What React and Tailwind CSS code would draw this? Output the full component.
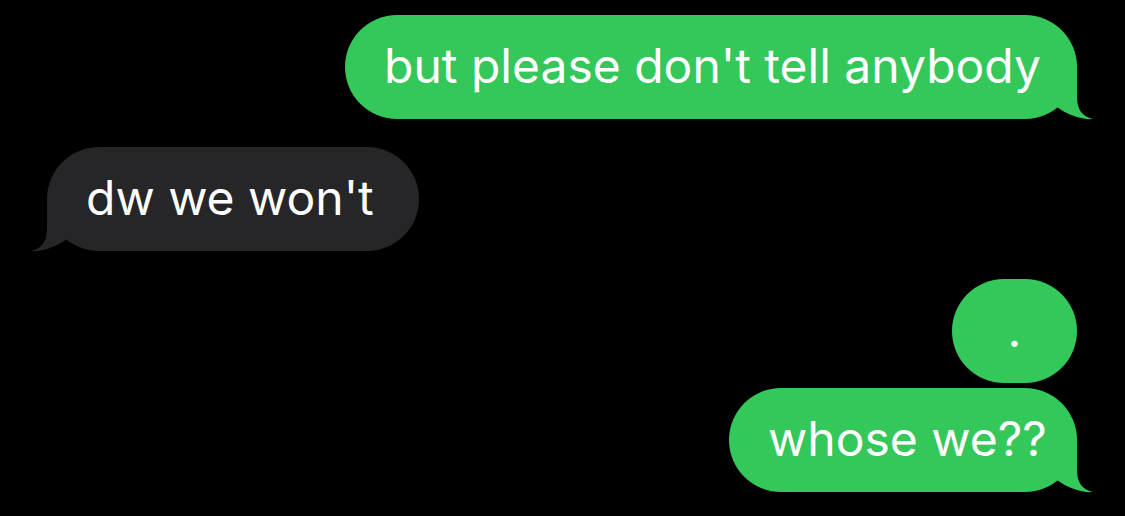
import React from "react";

function Tail({ color, left }) {
  return (
    <svg
      className={
        left
          ? "absolute bottom-[-2px] left-[-16px] -scale-x-100"
          : "absolute bottom-[-2px] right-[-16px]"
      }
      width="40"
      height="56"
      viewBox="0 0 40 56"
    >
      <path
        d="M24,0 L24,32 C24,45 30,52 40,54 C30,55 14,50 4,42 L0,0 Z"
        fill={color}
      />
    </svg>
  );
}

function Bubble({ text, side, width, tail = true }) {
  const sent = side === "right";
  const color = sent ? "#34c759" : "#262629";
  return (
    <div className={sent ? "flex justify-end pr-[48px]" : "flex justify-start pl-[47px]"}>
      <div
        className={
          "relative h-[104px] rounded-full flex items-center pl-[39px] " +
          (sent ? "bg-[#34c759]" : "bg-[#262629]")
        }
        style={{ width }}
      >
        <span className="relative z-10 whitespace-nowrap text-white text-[48px] leading-none pb-[2px]">
          {text}
        </span>
        {tail && <Tail color={color} left={!sent} />}
      </div>
    </div>
  );
}

export default function App() {
  return (
    <div
      className="w-[1125px] h-[516px] bg-black overflow-hidden pt-[15px] flex flex-col"
      style={{ fontFamily: "Inter, 'Liberation Sans', sans-serif" }}
    >
      <Bubble text="but please don't tell anybody" side="right" width={732} />
      <div className="mt-[28px]">
        <Bubble text="dw we won't" side="left" width={372} />
      </div>
      <div className="mt-[28px]">
        <div className="flex justify-end pr-[48px]">
          <div className="h-[104px] w-[125px] rounded-full bg-[#34c759] flex items-center justify-center">
            <span className="text-white text-[48px] leading-none pb-[2px]">.</span>
          </div>
        </div>
      </div>
      <div className="mt-[5px]">
        <Bubble text="whose we??" side="right" width={348} />
      </div>
    </div>
  );
}
